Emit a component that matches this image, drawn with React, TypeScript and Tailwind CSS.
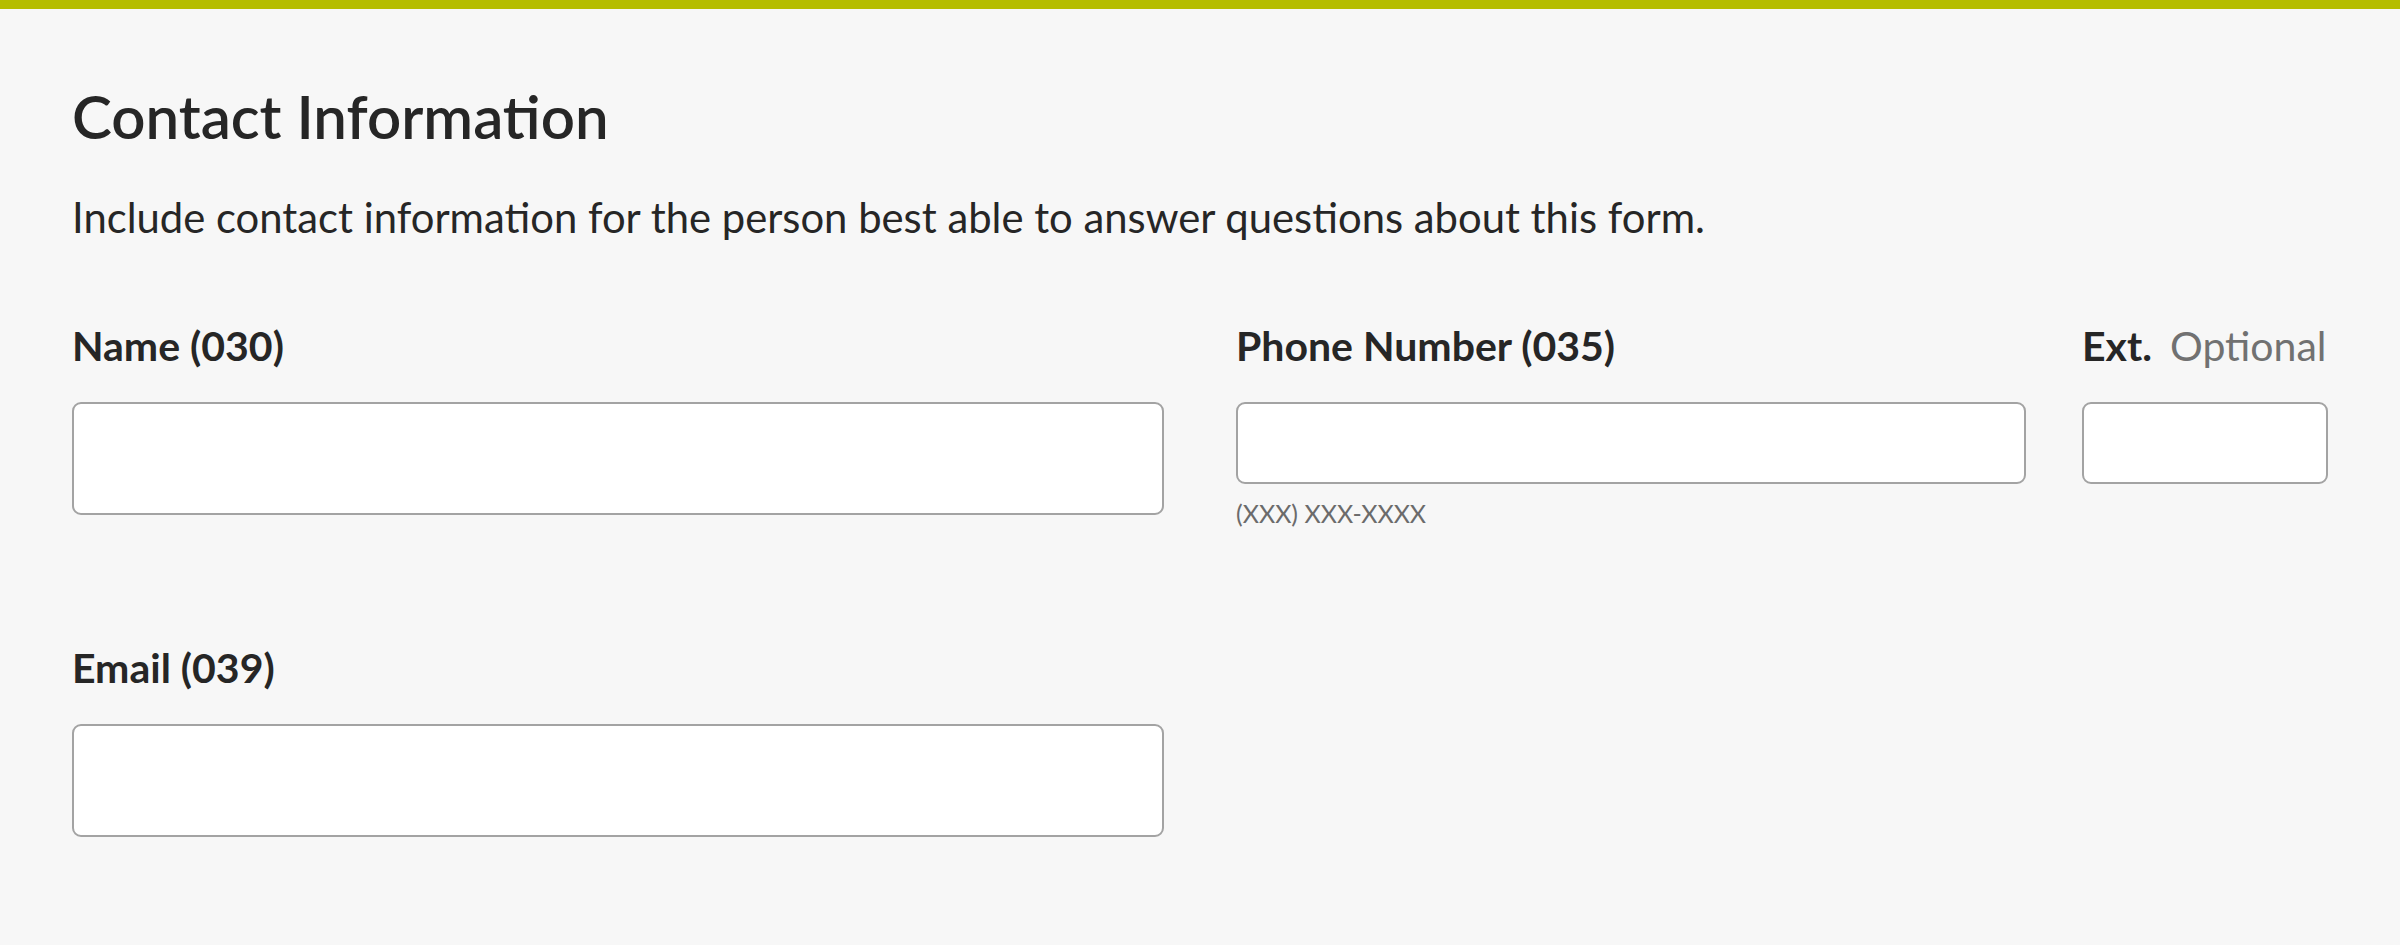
const font = { fontFamily: "Lato, 'Noto Sans', sans-serif" };

function Field({ label, optional, tall, hint }: { label: string; optional?: string; tall?: boolean; hint?: string }) {
  return (
    <div className="flex min-w-0 flex-col">
      <label className="flex h-[44px] items-center gap-[18px] whitespace-nowrap text-[41px] font-bold text-[#262626]">
        {label}
        {optional && <span className="font-normal text-[#717171]">{optional}</span>}
      </label>
      <input
        type="text"
        className={`mt-[34px] w-full rounded-[9px] border-2 border-[#a3a3a3] bg-white ${tall ? "h-[113px]" : "h-[82px]"}`}
      />
      {hint && <p className="mt-[14px] text-[25px] leading-[30px] text-[#6b6b6b]">{hint}</p>}
    </div>
  );
}

export default function App() {
  return (
    <div className="min-h-[945px] bg-[#f7f7f7] text-[#262626]" style={font}>
      <div className="h-[9px] bg-[#b5bd00]" />
      <section className="px-[72px]">
        <h1 className="mt-[76px] text-[60px] font-semibold leading-[62px]">Contact Information</h1>
        <p className="mt-[46px] text-[41.8px] leading-[48px]">
          Include contact information for the person best able to answer questions about this form.
        </p>

        <div className="mt-[83px] grid grid-cols-2 gap-x-[72px]">
          <Field label="Name (030)" tall />
          <div className="flex gap-[56px]">
            <div className="flex-1">
              <Field label="Phone Number (035)" hint="(XXX) XXX-XXXX" />
            </div>
            <div className="w-[246px]">
              <Field label="Ext." optional="Optional" />
            </div>
          </div>
        </div>

        <div className="mt-[118px] grid grid-cols-2 gap-x-[72px]">
          <Field label="Email (039)" tall />
        </div>
      </section>
    </div>
  );
}
